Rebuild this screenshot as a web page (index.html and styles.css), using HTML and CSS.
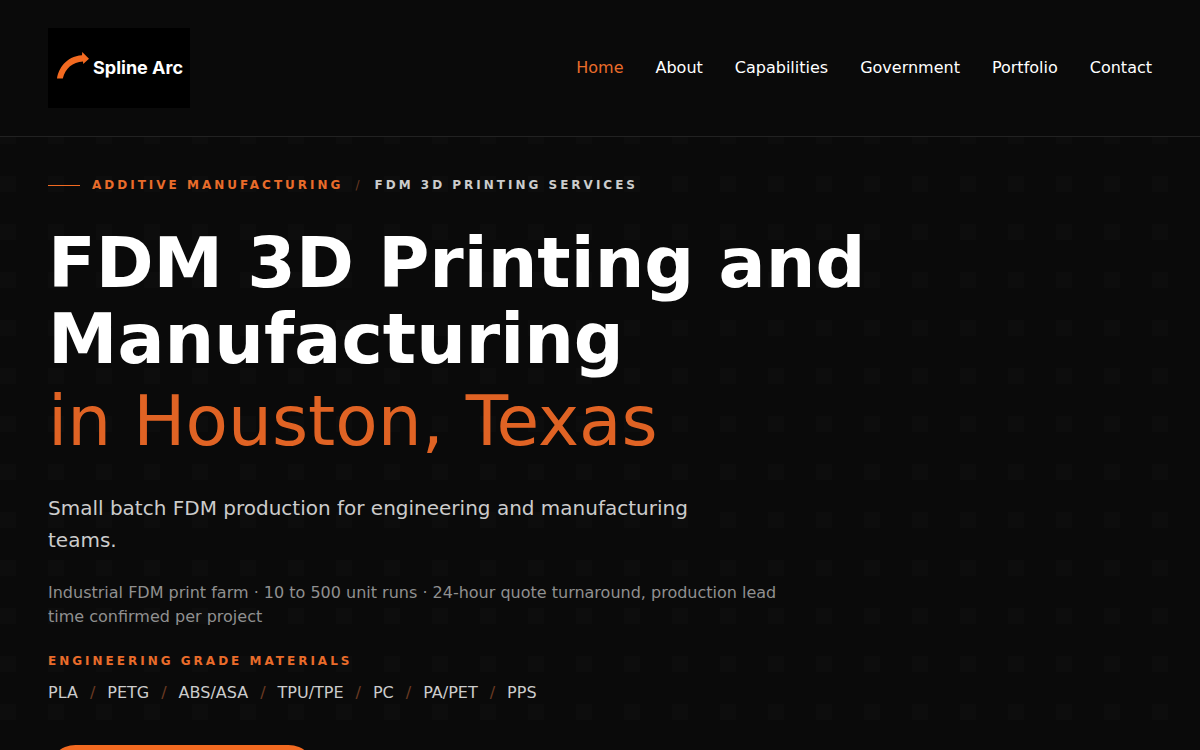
FILE: index.html
```html
<!DOCTYPE html>
<html lang="en">
<head>
  <meta charset="UTF-8" />
  <meta name="viewport" content="width=device-width, initial-scale=1.0" />
  <title>Spline Arc – FDM 3D Printing in Houston, Texas</title>
  <link rel="stylesheet" href="styles.css">
</head>
<body>
  <header class="site-header">
    <a href="#" class="logo">
      <svg class="logo-mark" viewBox="0 0 32 27" width="32" height="27" aria-hidden="true">
        <path d="M0 26.5 C1.5 17 8.5 4.5 25 3.2 L25.2 0 L32 6.7 L26.2 12 L26 9.6 C15.5 10 8.5 16.5 5.8 26.5 Z" fill="#f26a21"/>
      </svg>
      <span class="logo-text">Spline Arc</span>
    </a>
    <nav class="site-nav">
      <a href="#" class="active">Home</a>
      <a href="#">About</a>
      <a href="#">Capabilities</a>
      <a href="#">Government</a>
      <a href="#">Portfolio</a>
      <a href="#">Contact</a>
    </nav>
  </header>

  <main class="hero">
    <div class="breadcrumb">
      <span class="breadcrumb-line"></span>
      <span class="breadcrumb-main">ADDITIVE MANUFACTURING</span>
      <span class="breadcrumb-sep">/</span>
      <span class="breadcrumb-sub">FDM 3D PRINTING SERVICES</span>
    </div>
    <h1>FDM 3D Printing and Manufacturing <span>in Houston, Texas</span></h1>
    <p class="lead">Small batch FDM production for engineering and manufacturing teams.</p>
    <p class="details">Industrial FDM print farm · 10 to 500 unit runs · 24-hour quote turnaround, production lead time confirmed per project</p>
    <h2 class="materials-title">ENGINEERING GRADE MATERIALS</h2>
    <ul class="materials">
      <li>PLA</li>
      <li>PETG</li>
      <li>ABS/ASA</li>
      <li>TPU/TPE</li>
      <li>PC</li>
      <li>PA/PET</li>
      <li>PPS</li>
    </ul>
    <a href="#" class="button">Request a Quote</a>
  </main>
</body>
</html>
```

FILE: styles.css
```css
:root {
  --bg: #0a0a0a;
  --orange: #e96c2a;
  --button: #f26a21;
  --line: #222222;
  --slash: #6b3a22;
}

html, body {
  height: 750px;
  overflow: hidden;
}

body {
  display: flex;
  flex-direction: column;
  margin: 0;
  font-family: "DejaVu Sans", sans-serif;
  background-color: var(--bg);
  color: #ffffff;
}

.site-header {
  display: flex;
  justify-content: space-between;
  align-items: center;
  padding: 28px 48px;
  border-bottom: 1px solid var(--line);
}

.logo {
  display: flex;
  align-items: center;
  gap: 4px;
  width: 142px;
  height: 80px;
  box-sizing: border-box;
  padding-left: 9px;
  background-color: #000000;
  text-decoration: none;
}

.logo-mark {
  margin-bottom: 6px;
}

.logo-text {
  margin-bottom: 2px;
  font-family: Inter, sans-serif;
  font-size: 18px;
  font-weight: 700;
  color: #ffffff;
}

.site-nav {
  display: flex;
  gap: 32px;
  padding-bottom: 2px;
}

.site-nav a {
  font-size: 16px;
  color: #ffffff;
  text-decoration: none;
}

.site-nav a.active {
  color: var(--orange);
}

.hero {
  flex: 1;
  padding: 40px 48px 0;
  /* faint 16px squares on a 48px tile */
  background-image: conic-gradient(from 0deg at 16px 16px, transparent 270deg, rgba(255,255,255,0.012) 0);
  background-size: 48px 48px;
  background-position: 0 39px;
}

.breadcrumb {
  display: flex;
  align-items: center;
  font-size: 12px;
  font-weight: 700;
  letter-spacing: 3px;
  line-height: 16px;
}

.breadcrumb-line {
  width: 32px;
  height: 1px;
  margin-right: 12px;
  background-color: #f26a21;
}

.breadcrumb-main {
  color: var(--orange);
}

.breadcrumb-sep {
  margin: 0 12px;
  color: var(--slash);
  font-weight: 400;
}

.breadcrumb-sub {
  color: #cccccc;
}

h1 {
  max-width: 900px;
  margin: 32px 0 0;
  font-size: 69.8px;
  font-weight: 700;
  line-height: 76px;
  color: #ffffff;
}

h1 span {
  display: block;
  margin-top: 6px;
  font-size: 69.4px;
  font-weight: 400;
  color: #e06324;
}

.lead {
  max-width: 680px;
  margin: 33px 0 0;
  font-size: 20px;
  line-height: 32px;
  color: #cccccc;
}

.details {
  max-width: 740px;
  margin: 25px 0 0;
  font-size: 16px;
  line-height: 24px;
  color: #909090;
}

.materials-title {
  margin: 24px 0 0;
  font-size: 12px;
  font-weight: 700;
  letter-spacing: 3px;
  line-height: 16px;
  color: var(--orange);
}

.materials {
  display: flex;
  margin: 14px 0 0;
  padding: 0;
  list-style: none;
  font-size: 16px;
  line-height: 20px;
  color: #cccccc;
}

.materials li + li::before {
  content: "/";
  margin: 0 12px;
  color: var(--slash);
}

.button {
  display: inline-block;
  margin-top: 42px;
  padding: 18px 59px;
  border-radius: 28px;
  background-color: var(--button);
  color: #ffffff;
  font-weight: 700;
  text-decoration: none;
}
```
